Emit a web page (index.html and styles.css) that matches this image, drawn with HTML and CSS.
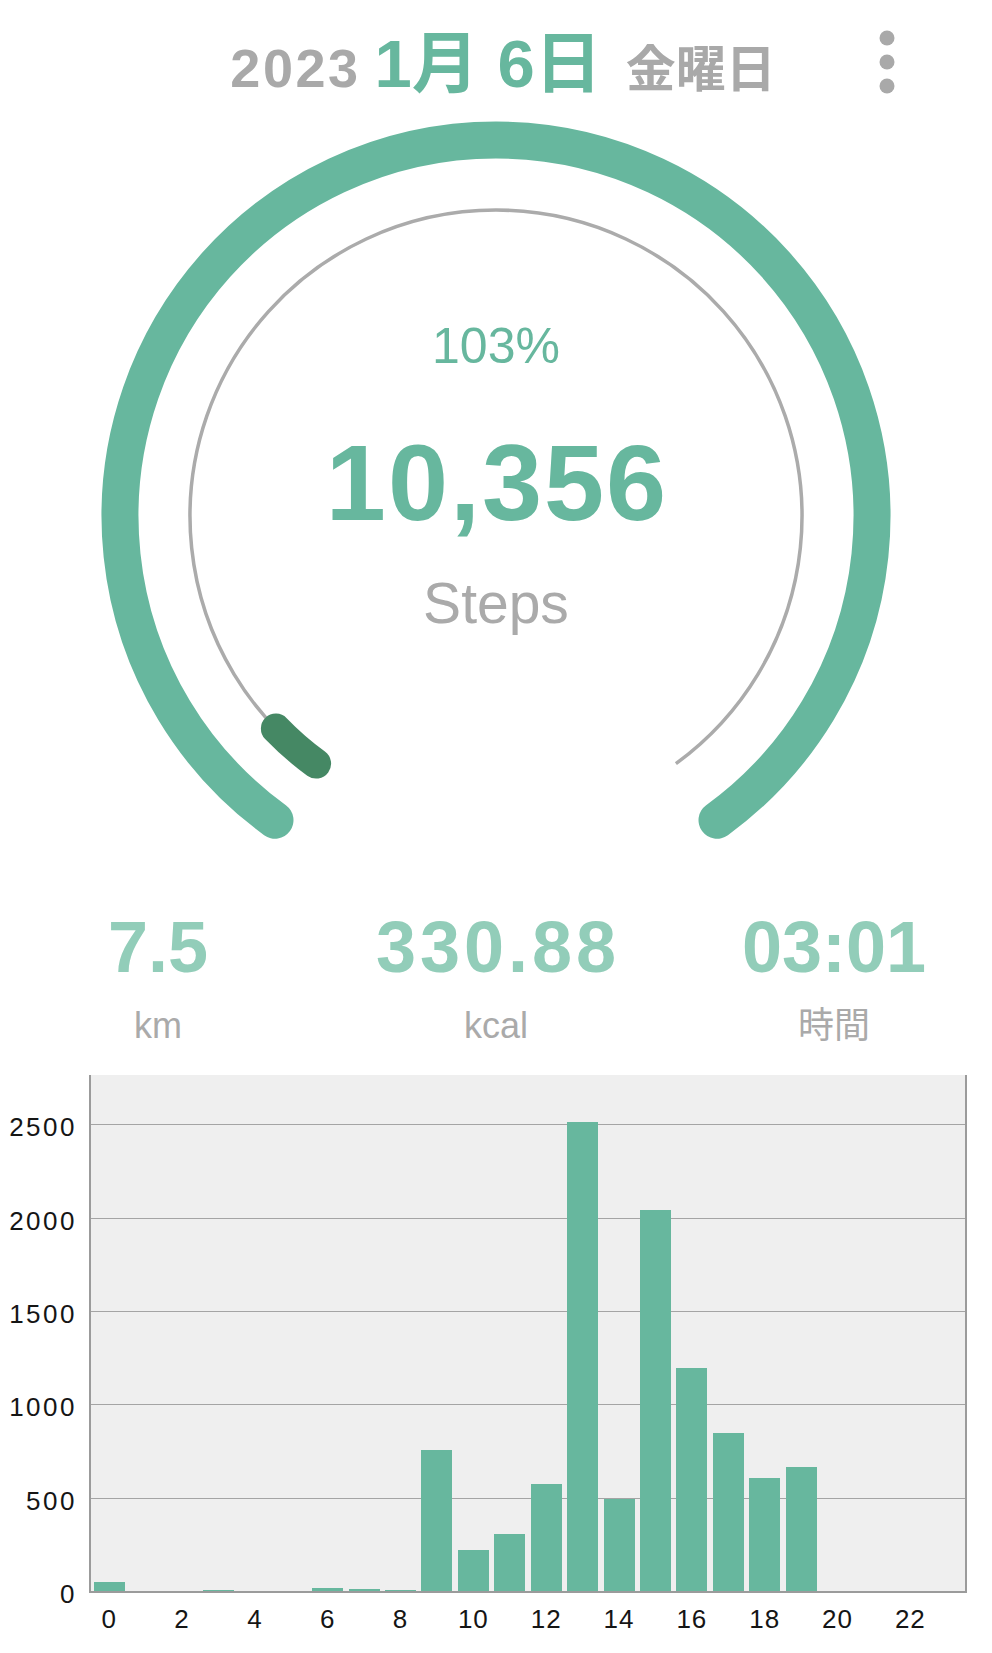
FILE: index.html
```html
<!DOCTYPE html>
<html lang="ja">
<head>
<meta charset="utf-8">
<title>歩数</title>
<link rel="stylesheet" href="styles.css">
</head>
<body>
<header class="top">
  <div class="date">
    <span class="year">2023</span>
    <span class="md">1月 6日</span>
    <span class="dow">金曜日</span>
  </div>
  <button class="menu" aria-label="menu">
    <svg width="20" height="64" viewBox="0 0 20 64">
      <circle cx="10" cy="8" r="7.5"/>
      <circle cx="10" cy="32" r="7.5"/>
      <circle cx="10" cy="56" r="7.5"/>
    </svg>
  </button>
</header>

<section class="gauge">
  <svg class="rings" width="992" height="750" viewBox="0 0 992 750">
    <path class="ring-outer" d="M 275.0 710.2 A 376 376 0 1 1 717.0 710.2"/>
    <path class="ring-inner" d="M 316.1 653.6 A 306 306 0 1 1 675.9 653.6"/>
    <path class="ring-mark" d="M 316.1 653.6 A 306 306 0 0 1 275.9 618.6"/>
  </svg>
  <div class="readout">
    <div class="pct">103%</div>
    <div class="count">10,356</div>
    <div class="count-label">Steps</div>
  </div>
</section>

<section class="stats">
  <div class="stat"><div class="stat-val">7.5</div><div class="stat-unit">km</div></div>
  <div class="stat"><div class="stat-val stat-val-wide">330.88</div><div class="stat-unit">kcal</div></div>
  <div class="stat"><div class="stat-val">03:01</div><div class="stat-unit">時間</div></div>
</section>

<section class="chart">
  <div class="yaxis">
    <div class="ytick">2500</div>
    <div class="ytick">2000</div>
    <div class="ytick">1500</div>
    <div class="ytick">1000</div>
    <div class="ytick">500</div>
    <div class="ytick">0</div>
  </div>
  <div class="plot">
    <div class="gridlines">
      <div class="gl"></div><div class="gl"></div><div class="gl"></div><div class="gl"></div><div class="gl"></div>
    </div>
    <div class="bars">
      <div class="bar" style="height:9.3px"></div>
      <div class="bar" style="height:0px"></div>
      <div class="bar" style="height:0px"></div>
      <div class="bar" style="height:1.2px"></div>
      <div class="bar" style="height:0px"></div>
      <div class="bar" style="height:0px"></div>
      <div class="bar" style="height:3.3px"></div>
      <div class="bar" style="height:2px"></div>
      <div class="bar" style="height:1.2px"></div>
      <div class="bar" style="height:141px"></div>
      <div class="bar" style="height:41px"></div>
      <div class="bar" style="height:57px"></div>
      <div class="bar" style="height:106.7px"></div>
      <div class="bar" style="height:469px"></div>
      <div class="bar" style="height:92px"></div>
      <div class="bar" style="height:380.7px"></div>
      <div class="bar" style="height:223px"></div>
      <div class="bar" style="height:157.7px"></div>
      <div class="bar" style="height:112.7px"></div>
      <div class="bar" style="height:124.3px"></div>
      <div class="bar" style="height:0px"></div>
      <div class="bar" style="height:0px"></div>
      <div class="bar" style="height:0px"></div>
      <div class="bar" style="height:0px"></div>
    </div>
  </div>
  <div class="xaxis">
    <span>0</span><span></span><span>2</span><span></span><span>4</span><span></span>
    <span>6</span><span></span><span>8</span><span></span><span>10</span><span></span>
    <span>12</span><span></span><span>14</span><span></span><span>16</span><span></span>
    <span>18</span><span></span><span>20</span><span></span><span>22</span><span></span>
  </div>
</section>
</body>
</html>
```
FILE: styles.css
```css
* { box-sizing: border-box; }

html, body {
  margin: 0;
  padding: 0;
  background: #ffffff;
}

body {
  width: 992px;
  font-family: "Liberation Sans", "Noto Sans CJK JP", sans-serif;
  color: #111111;
}

/* ---------- header ---------- */
.top {
  display: grid;
  grid-template-columns: 1fr auto 1fr;
  height: 110px;
}

.date {
  grid-column: 2;
  display: flex;
  align-items: baseline;
  padding-top: 30px;
  padding-left: 14px;
  font-weight: bold;
}

.year {
  font-size: 54px;
  line-height: 54px;
  letter-spacing: 2.5px;
  color: #a9a9a9;
}

.md {
  margin-left: 14px;
  font-size: 67px;
  line-height: 67px;
  color: #67b79e;
}

.dow {
  margin-left: 24px;
  font-size: 50px;
  line-height: 50px;
  color: #a9a9a9;
}

.menu {
  grid-column: 3;
  justify-self: end;
  align-self: start;
  margin: 30px 95px 0 0;
  padding: 0;
  border: 0;
  background: none;
  width: 20px;
  height: 64px;
}

.menu svg { display: block; fill: #a9a9a9; }

/* ---------- gauge ---------- */
.gauge {
  display: grid;
  height: 750px;
}

.gauge > .rings,
.gauge > .readout {
  grid-area: 1 / 1;
}

.rings { display: block; }

.ring-outer {
  fill: none;
  stroke: #67b79e;
  stroke-width: 37;
  stroke-linecap: round;
}

.ring-inner {
  fill: none;
  stroke: #ababab;
  stroke-width: 3.5;
}

.ring-mark {
  fill: none;
  stroke: #458864;
  stroke-width: 30;
  stroke-linecap: round;
}

.readout {
  display: flex;
  flex-direction: column;
  align-items: center;
  padding-top: 210.7px;
}

.pct {
  font-size: 50px;
  line-height: 50px;
  color: #67b79e;
}

.count {
  margin-top: 57.9px;
  padding-left: 2px;
  font-size: 108px;
  line-height: 108px;
  font-weight: bold;
  letter-spacing: 2px;
  color: #67b79e;
}

.count-label {
  margin-top: 38.2px;
  font-size: 57px;
  line-height: 57px;
  color: #aaaaaa;
}

/* ---------- stats ---------- */
.stats {
  display: grid;
  grid-template-columns: repeat(3, 240px);
  column-gap: 98px;
  justify-content: center;
  padding-top: 51px;
}

.stat {
  display: flex;
  flex-direction: column;
  align-items: center;
}

.stat-val {
  font-size: 72px;
  line-height: 72px;
  font-weight: bold;
  color: #92cdb9;
}

.stat-val-wide {
  letter-spacing: 4px;
  padding-left: 4px;
}

.stat-unit {
  margin-top: 24.5px;
  font-size: 36px;
  line-height: 36px;
  color: #aaaaaa;
}

/* ---------- chart ---------- */
.chart {
  display: grid;
  grid-template-columns: 89px 878px;
  grid-template-rows: 518px auto;
  margin-top: 31.5px;
}

.yaxis {
  display: flex;
  flex-direction: column;
  justify-content: flex-end;
}

.ytick {
  flex: none;
  height: 93.33px;
  display: flex;
  align-items: center;
  justify-content: flex-end;
  padding-right: 12px;
  font-size: 26px;
  line-height: 26px;
  letter-spacing: 2.5px;
  color: #151515;
}

.ytick:last-child { margin-bottom: -47.67px; }

.plot {
  display: grid;
  height: 518px;
  background: #efefef;
  border-left: 2px solid #9b9b9b;
  border-right: 2px solid #9b9b9b;
  border-bottom: 2px solid #9b9b9b;
}

.plot > .gridlines,
.plot > .bars {
  grid-area: 1 / 1;
}

.gridlines {
  display: flex;
  flex-direction: column;
  justify-content: flex-end;
}

.gl {
  flex: none;
  height: 93.33px;
  border-top: 1.5px solid #a4a4a4;
}

.bars {
  display: grid;
  grid-template-columns: repeat(24, 1fr);
  align-items: end;
  justify-items: center;
}

.bar {
  width: 31px;
  background: #67b79e;
}

.xaxis {
  grid-column: 2;
  display: grid;
  grid-template-columns: repeat(24, 1fr);
  padding: 0 2px;
  margin-top: 13px;
}

.xaxis span {
  text-align: center;
  font-size: 26px;
  line-height: 26px;
  letter-spacing: 1px;
  color: #151515;
  white-space: nowrap;
}
```
